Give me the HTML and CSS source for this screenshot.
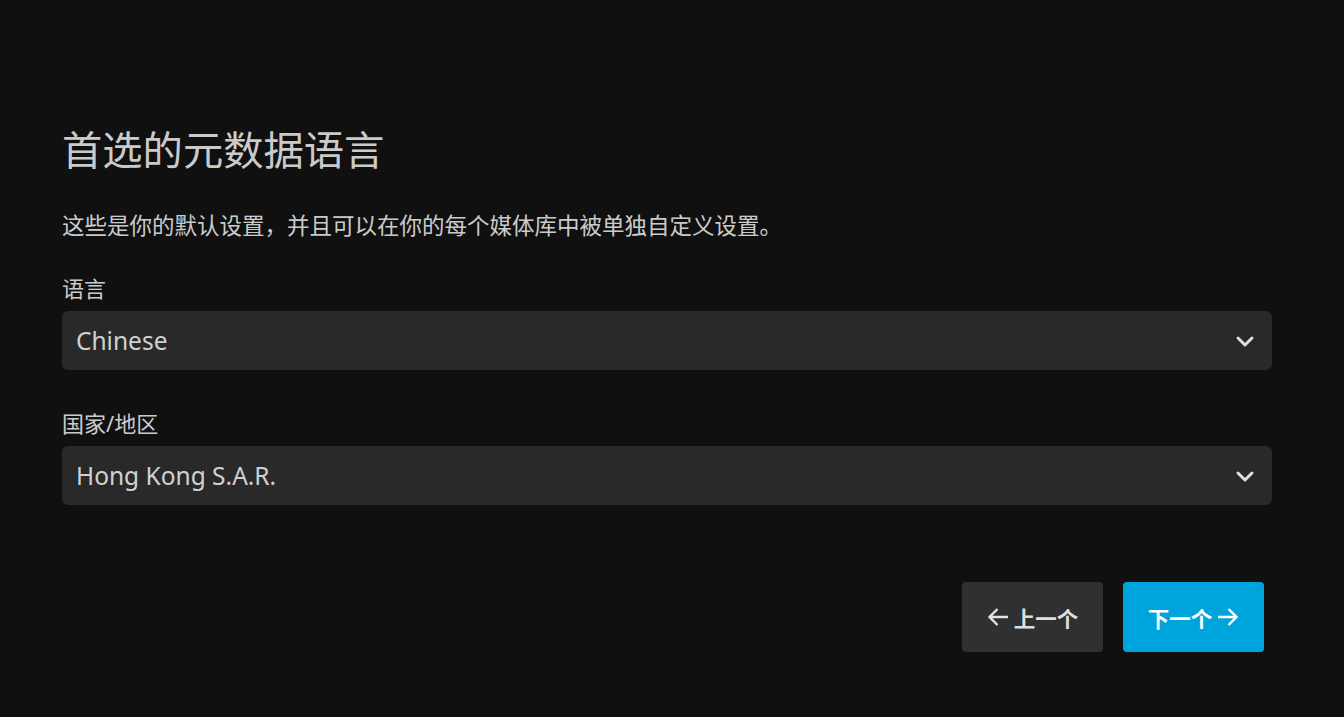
FILE: index.html
```html
<!DOCTYPE html>
<html lang="zh-CN">
  <head>
    <meta charset="UTF-8" />
    <meta name="viewport" content="width=device-width, initial-scale=1.0" />
    <title>Jellyfin</title>
    <link rel="stylesheet" href="styles.css">
  </head>
  <body>
    <div class="wizard">
      <h1>首选的元数据语言</h1>
      <p class="description">这些是你的默认设置，并且可以在你的每个媒体库中被单独自定义设置。</p>

      <!-- Language -->
      <div class="field">
        <label class="select-label" for="language">语言</label>
        <div class="select-wrap">
          <select id="language" class="select">
            <option>Chinese</option>
          </select>
          <svg class="chevron" viewBox="0 0 24 24" width="24" height="24">
            <path d="M5 9l7 7 7-7" fill="none" stroke="currentColor" stroke-width="3" stroke-linecap="round" stroke-linejoin="round" />
          </svg>
        </div>
      </div>

      <!-- Country -->
      <div class="field">
        <label class="select-label" for="country">国家/地区</label>
        <div class="select-wrap">
          <select id="country" class="select">
            <option>Hong Kong S.A.R.</option>
          </select>
          <svg class="chevron" viewBox="0 0 24 24" width="24" height="24">
            <path d="M5 9l7 7 7-7" fill="none" stroke="currentColor" stroke-width="3" stroke-linecap="round" stroke-linejoin="round" />
          </svg>
        </div>
      </div>

      <div class="wizard-buttons">
        <button class="button button-prev">
          <svg viewBox="0 0 22 20" width="22" height="20">
            <path d="M21 10H2.5M10.5 2L2.5 10l8 8" fill="none" stroke="currentColor" stroke-width="2.4" stroke-linejoin="miter" />
          </svg>
          <span>上一个</span>
        </button>
        <button class="button button-next">
          <span>下一个</span>
          <svg viewBox="0 0 22 20" width="22" height="20">
            <path d="M1 10h18.5M11.5 2l8 8-8 8" fill="none" stroke="currentColor" stroke-width="2.4" stroke-linejoin="miter" />
          </svg>
        </button>
      </div>
    </div>
  </body>
</html>
```

FILE: styles.css
```css
html,
body {
  margin: 0;
  height: 100%;
}
body {
  background-color: #101010;
  color: rgba(255, 255, 255, 0.8);
  font-family: 'Noto Sans', 'Noto Sans CJK SC', sans-serif;
}
.wizard {
  width: 1210px;
  padding: 124px 0 0 62px;
  display: flex;
  flex-direction: column;
}
h1 {
  margin: 0;
  font-size: 40.3px;
  font-weight: 400;
  line-height: 52px;
}
.description {
  margin: 34px 0 0;
  font-size: 22.5px;
  line-height: 32px;
}
.field {
  display: flex;
  flex-direction: column;
  margin-top: 32px;
}
.field + .field {
  margin-top: 39px;
}
.select-label {
  font-size: 22px;
  line-height: 28px;
  margin-bottom: 9px;
}
.select-wrap {
  position: relative;
}
.select {
  width: 100%;
  height: 59px;
  appearance: none;
  -webkit-appearance: none;
  border: none;
  border-radius: 6px;
  background-color: #292929;
  color: rgba(255, 255, 255, 0.8);
  font-family: inherit;
  font-size: 24.5px;
  padding: 0 14px;
  outline: none;
}
.chevron {
  position: absolute;
  right: 15px;
  top: 18px;
  color: rgba(255, 255, 255, 0.85);
  pointer-events: none;
}
.wizard-buttons {
  display: flex;
  justify-content: flex-end;
  gap: 20px;
  margin-top: 77px;
  padding-right: 8px;
}
.button {
  width: 141px;
  height: 70px;
  border: none;
  border-radius: 4px;
  display: flex;
  align-items: center;
  justify-content: center;
  gap: 5px;
  font-family: inherit;
  font-size: 21.5px;
  font-weight: 700;
  cursor: pointer;
}
.button-prev {
  background-color: #303030;
  color: rgba(255, 255, 255, 0.87);
}
.button-next {
  background-color: #00a4dc;
  color: #fff;
}
```
